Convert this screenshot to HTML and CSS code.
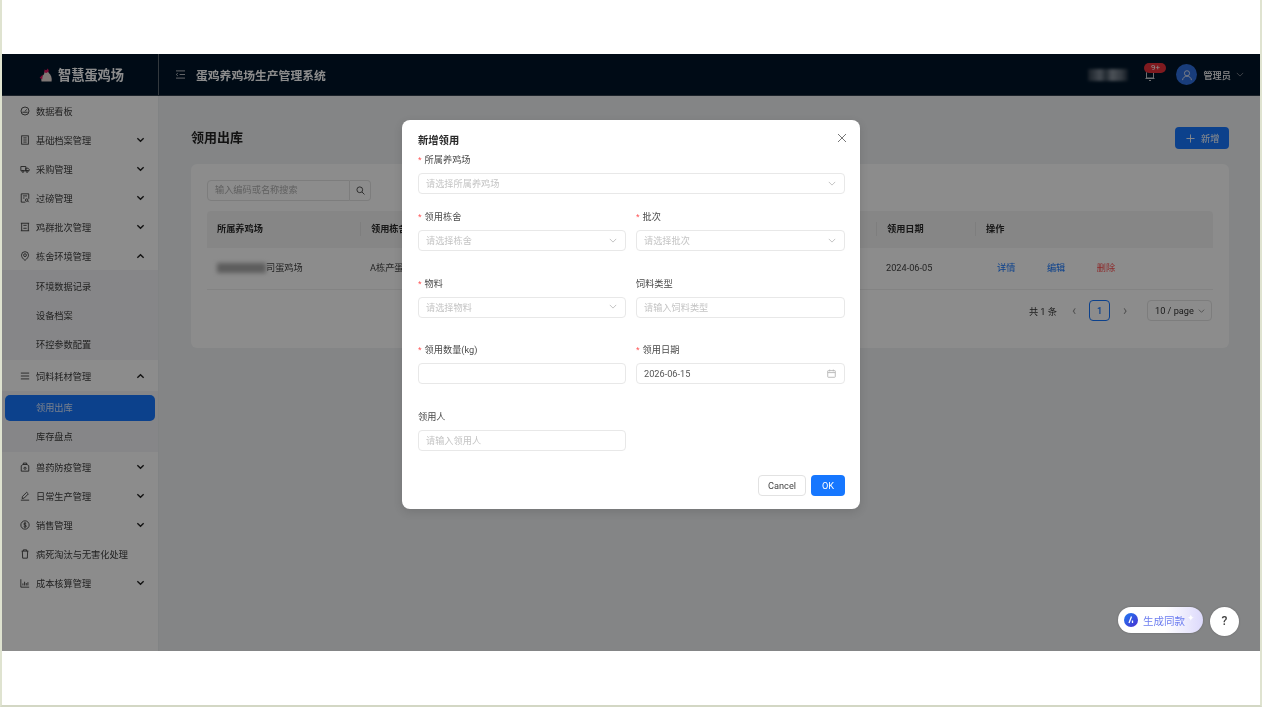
FILE: index.html
```html
<!DOCTYPE html>
<html lang="zh-CN">
<head>
    <meta charset="UTF-8">
    <meta name="viewport" content="width=device-width, initial-scale=1.0">
    <title>领用出库</title>
    <link rel="stylesheet" href="styles.css">
</head>
<body>
<div class="frame">
    <div class="app">
        <!-- 顶部栏 -->
        <header class="topbar">
            <div class="brand">
                <svg class="brand-icon" viewBox="0 0 14 14">
                    <path d="M2.500 13.500c-.6-2.800.2-5.500 2.500-7.300L5.600 3.500 8.500 2.600 9.800 5c2.200 1.500 3.400 5 2.800 8.500z" fill="#e8d9d6"/>
                    <path d="M5.300 4.400 5.500 1.400l1.800.9L8.900.4l1 2.900L7.500 5z" fill="#e2125f"/>
                    <path d="M.6 9.800 3.800 6.600 3.200 11.500z" fill="#e2125f"/>
                </svg>
                <span>智慧蛋鸡场</span>
            </div>
            <div class="topbar-title">
                <svg class="fold-icon" viewBox="0 0 12 10" fill="none" stroke="#c9ccd0" stroke-width="1">
                    <path d="M1 1h10M5 5h6M1 9h10M3 3.500 1.300 5 3 6.500"/>
                </svg>
                <span>蛋鸡养鸡场生产管理系统</span>
            </div>
            <div class="topbar-right">
                <div class="blur-block"></div>
                <div class="bell">
                    <svg viewBox="0 0 10 12" fill="none" stroke="#c9ccd0" stroke-width="1">
                        <path d="M1.500 9V3.500a3.500 3.500 0 0 1 7 0V9zM.5 9.500h9M4 11.500h2"/>
                    </svg>
                    <span class="badge">9+</span>
                </div>
                <div class="avatar">
                    <svg viewBox="0 0 14 14" fill="none" stroke="#dfe6f5" stroke-width="1.100">
                        <circle cx="7" cy="5" r="3"/>
                        <path d="M1.800 13c.4-3 2.500-4.600 5.200-4.600s4.800 1.600 5.200 4.600"/>
                    </svg>
                </div>
                <span class="user-name">管理员</span>
                <svg class="user-caret" viewBox="0 0 10 6" fill="none" stroke="#8a8f96" stroke-width="1"><path d="M1 1l4 4 4-4"/></svg>
            </div>
        </header>

        <div class="layout">
            <!-- 侧边菜单 -->
            <nav class="sidebar">
                <div class="menu-item">
                    <svg class="menu-icon" viewBox="0 0 12 12"><circle cx="6" cy="6" r="4.800"/><path d="M2.800 7.500h6.400M6 6.500l2-2.500"/></svg>
                    <span>数据看板</span>
                </div>
                <div class="menu-item">
                    <svg class="menu-icon" viewBox="0 0 12 12"><rect x="2" y="1" width="8" height="10"/><path d="M4 3.500h4M4 6h4M4 8.500h4"/></svg>
                    <span>基础档案管理</span>
                    <svg class="caret" viewBox="0 0 10 6"><path d="M1.500 1 5 4.500 8.500 1"/></svg>
                </div>
                <div class="menu-item">
                    <svg class="menu-icon" viewBox="0 0 12 12"><path d="M1 3h6v5H1zM7 5h2.500L11 6.500V8H7z"/><circle cx="3.500" cy="9" r="1.100"/><circle cx="8.500" cy="9" r="1.100"/></svg>
                    <span>采购管理</span>
                    <svg class="caret" viewBox="0 0 10 6"><path d="M1.500 1 5 4.500 8.500 1"/></svg>
                </div>
                <div class="menu-item">
                    <svg class="menu-icon" viewBox="0 0 12 12"><path d="M6.500 11H1.500V1h9v6M3.500 3.500h5M3.500 6h2"/><circle cx="8" cy="8.500" r="1.500"/><path d="m9 9.500 1.500 1.500"/></svg>
                    <span>过磅管理</span>
                    <svg class="caret" viewBox="0 0 10 6"><path d="M1.500 1 5 4.500 8.500 1"/></svg>
                </div>
                <div class="menu-item">
                    <svg class="menu-icon" viewBox="0 0 12 12"><path d="M1 1.500h10M1 10.500h10M2 1.500v9M10 1.500v9M4 4h4M4 7.500h4"/></svg>
                    <span>鸡群批次管理</span>
                    <svg class="caret" viewBox="0 0 10 6"><path d="M1.500 1 5 4.500 8.500 1"/></svg>
                </div>
                <div class="menu-item">
                    <svg class="menu-icon" viewBox="0 0 12 12"><path d="M6 11.300C3.500 9.300 1.800 7.300 1.800 5a4.200 4.200 0 0 1 8.400 0c0 2.300-1.700 4.300-4.200 6.300z"/><circle cx="6" cy="5" r="1.700"/></svg>
                    <span>栋舍环境管理</span>
                    <svg class="caret" viewBox="0 0 10 6"><path d="M1.500 5 5 1.500 8.500 5"/></svg>
                </div>
                <div class="submenu submenu-env">
                    <div class="sub-item">环境数据记录</div>
                    <div class="sub-item">设备档案</div>
                    <div class="sub-item">环控参数配置</div>
                </div>
                <div class="menu-item tall">
                    <svg class="menu-icon" viewBox="0 0 12 12"><path d="M1 2.500h10M1 6h10M1 9.500h10"/></svg>
                    <span>饲料耗材管理</span>
                    <svg class="caret" viewBox="0 0 10 6"><path d="M1.500 5 5 1.500 8.500 5"/></svg>
                </div>
                <div class="submenu submenu-feed">
                    <div class="sub-item active">领用出库</div>
                    <div class="sub-item">库存盘点</div>
                </div>
                <div class="menu-item">
                    <svg class="menu-icon" viewBox="0 0 12 12"><path d="M1.500 11V4.500L3.500 3h5l2 1.500V11zM4 3V1.300h4V3"/><circle cx="6" cy="7.500" r="1.300"/></svg>
                    <span>兽药防疫管理</span>
                    <svg class="caret" viewBox="0 0 10 6"><path d="M1.500 1 5 4.500 8.500 1"/></svg>
                </div>
                <div class="menu-item">
                    <svg class="menu-icon" viewBox="0 0 12 12"><path d="M1 11h10M2.500 9l.5-2.500L8 1.500l2 2-5 5z"/></svg>
                    <span>日常生产管理</span>
                    <svg class="caret" viewBox="0 0 10 6"><path d="M1.500 1 5 4.500 8.500 1"/></svg>
                </div>
                <div class="menu-item">
                    <svg class="menu-icon" viewBox="0 0 12 12"><circle cx="6" cy="6" r="5"/><path d="M7.500 4.300C7 3.500 4.500 3.300 4.500 4.800S7.700 6 7.700 7.400 5 8.700 4.400 7.700M6 2.700v6.600"/></svg>
                    <span>销售管理</span>
                    <svg class="caret" viewBox="0 0 10 6"><path d="M1.500 1 5 4.500 8.500 1"/></svg>
                </div>
                <div class="menu-item">
                    <svg class="menu-icon" viewBox="0 0 12 12"><path d="M2 2.500h8M4 2.500V1h4v1.500M2.800 2.500l.4 8.500h5.600l.4-8.500"/></svg>
                    <span>病死淘汰与无害化处理</span>
                </div>
                <div class="menu-item">
                    <svg class="menu-icon" viewBox="0 0 12 12"><path d="M1 1.500v9.500h10M3.500 9V6.500M5.500 9V4.500M7.500 9V6M9.500 9V5"/></svg>
                    <span>成本核算管理</span>
                    <svg class="caret" viewBox="0 0 10 6"><path d="M1.500 1 5 4.500 8.500 1"/></svg>
                </div>
            </nav>

            <!-- 主内容 -->
            <main class="content">
                <div class="page-head">
                    <h1>领用出库</h1>
                    <button class="btn-primary add-btn">
                        <svg viewBox="0 0 10 10" fill="none" stroke="currentColor" stroke-width="1"><path d="M5 .5v9M.5 5h9"/></svg>
                        <span>新增</span>
                    </button>
                </div>
                <section class="card">
                    <div class="search">
                        <div class="search-input">输入编码或名称搜索</div>
                        <div class="search-btn">
                            <svg viewBox="0 0 10 10" fill="none" stroke="#555" stroke-width="1.100"><circle cx="4.200" cy="4.200" r="3.200"/><path d="m6.600 6.600 2.800 2.800"/></svg>
                        </div>
                    </div>
                    <div class="table-row table-head">
                        <div class="cell">所属养鸡场</div>
                        <div class="cell">领用栋舍</div>
                        <div class="cell">领用日期</div>
                        <div class="cell">操作</div>
                    </div>
                    <div class="table-row table-body">
                        <div class="cell farm"><span class="blur-name"></span>司蛋鸡场</div>
                        <div class="cell">A栋产蛋舍</div>
                        <div class="cell">2024-06-05</div>
                        <div class="cell actions">
                            <span class="link">详情</span>
                            <span class="link">编辑</span>
                            <span class="link danger">删除</span>
                        </div>
                    </div>
                    <div class="pager">
                        <span class="pager-total">共 1 条</span>
                        <span class="pager-arrow">‹</span>
                        <span class="pager-num">1</span>
                        <span class="pager-arrow">›</span>
                        <div class="pager-size">
                            <span>10 / page</span>
                            <svg viewBox="0 0 10 6" fill="none" stroke="#6a6a6a" stroke-width="1"><path d="M1 1l4 4 4-4"/></svg>
                        </div>
                    </div>
                </section>
            </main>
        </div>

        <!-- 弹窗遮罩 -->
        <div class="mask">
            <div class="modal">
                <svg class="modal-close" viewBox="0 0 10 10" fill="none" stroke="#777" stroke-width="1"><path d="M1 1l8 8M9 1l-8 8"/></svg>
                <h2 class="modal-title">新增领用</h2>

                <div class="form-row first">
                    <div class="form-item">
                        <label class="required">所属养鸡场</label>
                        <div class="field placeholder">请选择所属养鸡场
                            <svg class="field-icon" viewBox="0 0 10 6"><path d="M1 1l4 4 4-4"/></svg>
                        </div>
                    </div>
                </div>
                <div class="form-row two">
                    <div class="form-item">
                        <label class="required">领用栋舍</label>
                        <div class="field placeholder">请选择栋舍
                            <svg class="field-icon" viewBox="0 0 10 6"><path d="M1 1l4 4 4-4"/></svg>
                        </div>
                    </div>
                    <div class="form-item">
                        <label class="required">批次</label>
                        <div class="field placeholder">请选择批次
                            <svg class="field-icon" viewBox="0 0 10 6"><path d="M1 1l4 4 4-4"/></svg>
                        </div>
                    </div>
                </div>
                <div class="form-row two">
                    <div class="form-item">
                        <label class="required">物料</label>
                        <div class="field placeholder">请选择物料
                            <svg class="field-icon" viewBox="0 0 10 6"><path d="M1 1l4 4 4-4"/></svg>
                        </div>
                    </div>
                    <div class="form-item">
                        <label>饲料类型</label>
                        <div class="field placeholder">请输入饲料类型</div>
                    </div>
                </div>
                <div class="form-row two">
                    <div class="form-item">
                        <label class="required">领用数量(kg)</label>
                        <div class="field"></div>
                    </div>
                    <div class="form-item">
                        <label class="required">领用日期</label>
                        <div class="field">2026-06-15
                            <svg class="field-icon date" viewBox="0 0 10 10"><rect x=".8" y="1.800" width="8.400" height="7.400" rx=".6"/><path d="M.8 4h8.400M3 .6v2M7 .6v2"/></svg>
                        </div>
                    </div>
                </div>
                <div class="form-row two last">
                    <div class="form-item">
                        <label>领用人</label>
                        <div class="field placeholder">请输入领用人</div>
                    </div>
                </div>

                <div class="modal-footer">
                    <button class="btn-default">Cancel</button>
                    <button class="btn-primary">OK</button>
                </div>
            </div>
        </div>

        <!-- 悬浮按钮 -->
        <div class="float-tools">
            <div class="gen-btn">
                <svg viewBox="0 0 14 14">
                    <defs><linearGradient id="genGrad" x1="0" y1="0" x2="1" y2="1"><stop offset="0" stop-color="#1f7bf2"/><stop offset="1" stop-color="#4a2fd0"/></linearGradient></defs>
                    <circle cx="7" cy="7" r="7" fill="url(#genGrad)"/>
                    <path d="M7.500 3.500 5 10M8.500 7.500v2.500" stroke="#fff" stroke-width="1.300" fill="none"/>
                </svg>
                <span>生成同款</span>
                <i class="spark">✦</i>
            </div>
            <div class="help-btn">?</div>
        </div>
    </div>
</div>
</body>
</html>
```

FILE: styles.css
```css
* {
    box-sizing: border-box;
}
html, body {
    margin: 0;
    padding: 0;
    background: #fff;
}
body {
    font-family: Roboto, "Noto Sans CJK SC", sans-serif;
    font-size: 9.2px;
    color: #333;
}
.frame {
    width: 1262px;
    height: 707px;
    padding-top: 54px;
    background: #fff;
    border-left: 2px solid #dfe3d0;
    border-right: 2px solid #dfe3d0;
    border-bottom: 2px solid #d3d7c4;
    filter: blur(0.6px);
}
.app {
    position: relative;
    height: 597px;
    overflow: hidden;
    background: #f0f2f5;
}

/* 顶部栏 */
.topbar {
    display: flex;
    align-items: center;
    height: 42px;
    background: #001529;
    color: #fff;
    border-bottom: 1px solid #33404d;
}
.brand {
    display: flex;
    align-items: center;
    justify-content: center;
    gap: 5px;
    width: 157px;
    height: 100%;
    padding-left: 3px;
    border-right: 1px solid #5b6670;
    font-size: 13.2px;
    font-weight: 700;
}
.brand-icon {
    width: 14px;
    height: 14px;
}
.topbar-title {
    display: flex;
    align-items: center;
    gap: 10px;
    padding-left: 16px;
    font-size: 11.8px;
    font-weight: 700;
}
.fold-icon {
    width: 11px;
    height: 9px;
}
.topbar-right {
    display: flex;
    align-items: center;
    margin-left: auto;
    padding-right: 16px;
}
.blur-block {
    width: 40px;
    height: 12px;
    background: linear-gradient(90deg, #2c3a48, #7d8894 30%, #3c4a58 45%, #8b95a0 60%, #5a6672 85%, #1c2c3c);
    filter: blur(1.5px);
}
.bell {
    position: relative;
    width: 10px;
    height: 12px;
    margin-left: 17px;
    margin-right: 21px;
}
.bell svg {
    width: 10px;
    height: 12px;
    display: block;
}
.badge {
    position: absolute;
    top: -6px;
    left: -1px;
    width: 22px;
    height: 10px;
    border-radius: 5px;
    background: #e8313a;
    color: #fff;
    font-size: 8px;
    line-height: 10px;
    text-align: center;
}
.avatar {
    display: flex;
    align-items: center;
    justify-content: center;
    width: 21px;
    height: 21px;
    border-radius: 50%;
    background: #2f6fe0;
}
.avatar svg {
    width: 12px;
    height: 12px;
}
.user-name {
    margin-left: 6px;
    font-weight: 500;
}
.user-caret {
    width: 8px;
    height: 5px;
    margin-left: 5px;
}

/* 侧边菜单 */
.layout {
    display: flex;
    height: 555px;
}
.sidebar {
    width: 157px;
    flex: none;
    background: #fff;
    border-right: 1px solid #eceef0;
}
.menu-item {
    display: flex;
    align-items: center;
    height: 29px;
    padding: 0 13px 0 18px;
    color: #3c3c3c;
}
.menu-item.tall {
    height: 31px;
}
.menu-icon {
    width: 10px;
    height: 10px;
    margin-right: 6px;
    fill: none;
    stroke: #333;
    stroke-width: 1;
}
.caret {
    width: 9px;
    height: 6px;
    margin-left: auto;
    fill: none;
    stroke: #222;
    stroke-width: 1.500;
}
.submenu {
    padding: 3px;
    background: #f4f5f7;
}
.submenu-env {
    padding-top: 4px;
    padding-bottom: 2px;
}
.submenu-feed {
    padding-top: 4px;
    padding-bottom: 2px;
}
.sub-item {
    height: 26px;
    line-height: 26px;
    padding-left: 31px;
    margin-bottom: 3px;
    border-radius: 5px;
    color: #3c3c3c;
}
.sub-item:last-child {
    margin-bottom: 0;
}
.sub-item.active {
    background: #1677ff;
    color: #d8e6ff;
}

/* 主内容 */
.content {
    flex: 1;
    padding: 31px 31px 0 32px;
}
.page-head {
    display: flex;
    align-items: center;
    justify-content: space-between;
    height: 22px;
    margin-bottom: 15px;
}
.page-head h1 {
    margin: 0 0 3px;
    font-size: 13px;
    font-weight: 700;
    color: #222;
}
.btn-primary {
    height: 21px;
    padding: 0 8px;
    border: none;
    border-radius: 4px;
    background: #1677ff;
    color: #fff;
    font: inherit;
}
.add-btn {
    display: flex;
    align-items: center;
    gap: 6px;
    width: 54px;
    height: 22px;
    padding: 0 0 0 11px;
}
.add-btn svg {
    width: 9px;
    height: 9px;
}
.card {
    height: 184px;
    padding: 16px 16px 0;
    border-radius: 6px;
    background: #fff;
}
.search {
    display: flex;
    width: 164px;
    height: 21px;
    margin-bottom: 10px;
}
.search-input {
    flex: 1;
    padding-left: 7px;
    line-height: 18px;
    border: 1px solid #e4e4e4;
    border-radius: 4px 0 0 4px;
    color: #b0b0b0;
}
.search-btn {
    display: flex;
    align-items: center;
    justify-content: center;
    width: 21px;
    border: 1px solid #e4e4e4;
    border-left: none;
    border-radius: 0 4px 4px 0;
}
.search-btn svg {
    width: 9px;
    height: 9px;
}
.table-row {
    display: grid;
    grid-template-columns: 153px 516px 99px 238px;
    align-items: center;
}
.table-head {
    height: 37px;
    padding-bottom: 1px;
    background: #f5f5f5;
    font-weight: 700;
    color: #2a2a2a;
    border-radius: 4px 4px 0 0;
}
.table-head .cell + .cell {
    border-left: 1px solid #e6e6e6;
}
.cell {
    padding-left: 10px;
    line-height: 14px;
}
.table-body {
    height: 42px;
    padding-bottom: 2px;
    border-bottom: 1px solid #efefef;
    color: #444;
}
.farm {
    display: flex;
    align-items: center;
}
.blur-name {
    width: 49px;
    height: 10px;
    background: #aaa;
    filter: blur(2px);
}
.actions {
    display: flex;
    gap: 31.5px;
    padding-left: 22px;
}
.link {
    color: #1677ff;
}
.link.danger {
    color: #ff4d4f;
}
.pager {
    display: flex;
    align-items: center;
    justify-content: flex-end;
    height: 21px;
    margin-top: 10px;
    padding-right: 1px;
}
.pager-total {
    margin-right: 14px;
}
.pager-arrow {
    width: 6px;
    text-align: center;
    font-size: 14px;
    line-height: 21px;
    color: #999;
}
.pager-num {
    width: 21px;
    height: 21px;
    margin: 0 12px;
    border: 1px solid #1677ff;
    border-radius: 4px;
    color: #1677ff;
    font-weight: 500;
    line-height: 19px;
    text-align: center;
}
.pager-size {
    display: flex;
    align-items: center;
    justify-content: space-between;
    width: 65px;
    height: 21px;
    margin-left: 19px;
    padding: 0 6px 0 7px;
    border: 1px solid #e4e4e4;
    border-radius: 4px;
}
.pager-size svg {
    width: 7px;
    height: 4px;
}

/* 弹窗 */
.mask {
    position: absolute;
    top: 0;
    left: 0;
    right: 0;
    bottom: 0;
    display: flex;
    justify-content: center;
    align-items: flex-start;
    padding-top: 66px;
    background: rgba(0, 0, 0, 0.45);
}
.modal {
    position: relative;
    width: 458px;
    height: 389px;
    padding: 14px 15px 13px 16px;
    border-radius: 8px;
    background: #fff;
    box-shadow: 0 3px 10px rgba(0, 0, 0, 0.12);
}
.modal-close {
    position: absolute;
    top: 13px;
    right: 13px;
    width: 10px;
    height: 10px;
}
.modal-title {
    margin: 0 0 5px;
    font-size: 10.3px;
    font-weight: 700;
    line-height: 14px;
    color: #2a2a2a;
}
.form-row {
    margin-bottom: 25.7px;
}
.form-row.first {
    margin-bottom: 16px;
}
.form-row.two {
    display: grid;
    grid-template-columns: 208px 209px;
    column-gap: 10px;
}
.form-row.last {
    margin-bottom: 24px;
}
.form-item label {
    display: block;
    height: 14px;
    margin-bottom: 6px;
    line-height: 14px;
    color: #4a4a4a;
}
.required::before {
    content: "*";
    margin-right: 3px;
    color: #ff4d4f;
    font-family: "Liberation Sans", sans-serif;
}
.field {
    display: flex;
    align-items: center;
    justify-content: space-between;
    height: 21px;
    padding: 0 8px 1px 7px;
    border: 1px solid #e8e8e8;
    border-radius: 4px;
    color: #555;
    background: #fff;
}
.field.placeholder {
    color: #c4c4c4;
}
.field-icon {
    width: 8px;
    height: 5px;
    fill: none;
    stroke: #b5b5b5;
    stroke-width: 1;
}
.field-icon.date {
    width: 9px;
    height: 9px;
}
.modal-footer {
    display: flex;
    justify-content: flex-end;
    gap: 5px;
}
.btn-default {
    width: 48px;
    height: 21px;
    border: 1px solid #e2e2e2;
    border-radius: 4px;
    background: #fff;
    color: #444;
    font: inherit;
}
.modal-footer .btn-primary {
    width: 34px;
}

/* 悬浮按钮 */
.float-tools {
    position: absolute;
    right: 21px;
    bottom: 15px;
    display: flex;
    align-items: flex-start;
    gap: 7px;
}
.gen-btn {
    position: relative;
    display: flex;
    align-items: center;
    gap: 5px;
    width: 85px;
    height: 26px;
    padding-left: 6px;
    border-radius: 13px;
    background: linear-gradient(90deg, #fff 55%, #dcd9fb);
    color: #6d7ef0;
    font-size: 10.5px;
    box-shadow: 0 0 2px rgba(0, 0, 0, 0.25);
}
.gen-btn svg {
    width: 14px;
    height: 14px;
}
.spark {
    position: absolute;
    right: 8px;
    top: 6px;
    font-style: normal;
    font-size: 9px;
    color: #fff;
}
.help-btn {
    width: 29px;
    height: 29px;
    border-radius: 50%;
    background: #fff;
    color: #444;
    font-size: 12px;
    font-weight: 500;
    line-height: 29px;
    text-align: center;
    box-shadow: 0 0 2px rgba(0, 0, 0, 0.25);
}
```
